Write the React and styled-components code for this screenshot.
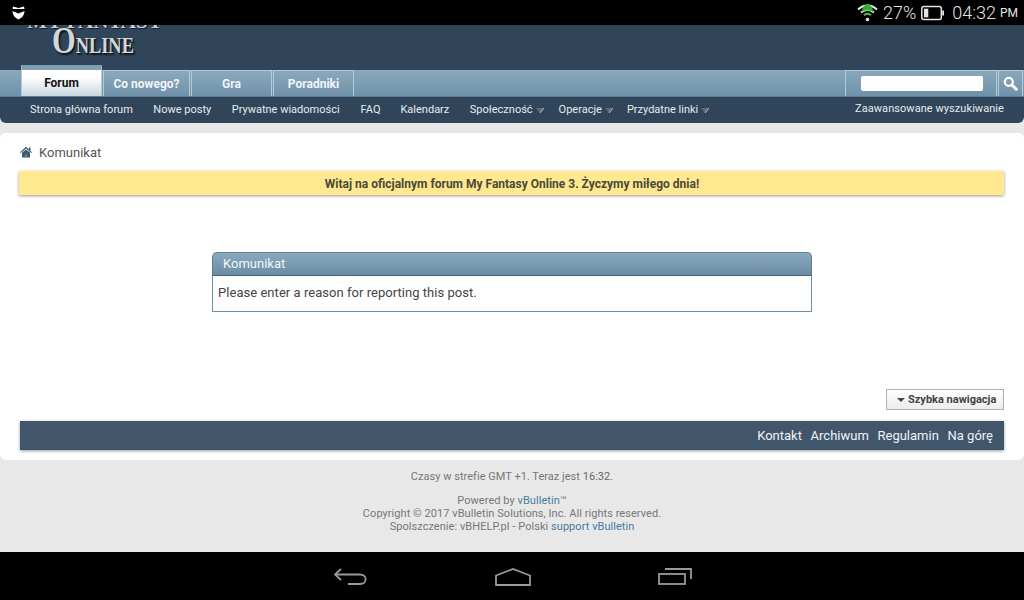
import React from "react";
import styled, { createGlobalStyle } from "styled-components";

const GlobalStyle = createGlobalStyle`
  html, body {
    margin: 0;
    padding: 0;
    background: #e8e8e8;
  }
  * {
    box-sizing: border-box;
  }
`;

const Page = styled.div`
  width: 1024px;
  height: 600px;
  display: flex;
  flex-direction: column;
  overflow: hidden;
  background: #e8e8e8;
  font-family: Roboto, "Liberation Sans", sans-serif;
`;

const StatusBar = styled.div`
  height: 25px;
  flex: none;
  background: #000;
  display: flex;
  align-items: center;
  padding: 0 6px 0 12px;
  color: #e4e4e4;
`;

const StatusRight = styled.div`
  margin-left: auto;
  display: flex;
  align-items: center;
`;

const Percent = styled.span`
  font-size: 18px;
  font-weight: 300;
  margin: 0 5px 0 5px;
`;

const Clock = styled.span`
  font-size: 18px;
  font-weight: 300;
  margin-left: 8px;
`;

const Meridiem = styled.span`
  font-size: 12px;
  margin-left: 4px;
`;

const Header = styled.div`
  height: 45px;
  flex: none;
  background: #304559;
  padding-left: 25px;
`;

const LogoTop = styled.div`
  width: 140px;
  height: 4px;
  overflow: hidden;
  display: flex;
  align-items: flex-end;
  justify-content: center;
  font-family: "Liberation Serif", serif;
  font-weight: bold;
  font-size: 21px;
  line-height: 0.7;
  white-space: nowrap;
  color: #c9ced2;
  text-shadow: 1px 1px 1px #10181f;
`;

const Logo = styled.div`
  width: fit-content;
  font-family: "Liberation Serif", serif;
  font-weight: bold;
  font-size: 23px;
  line-height: 30px;
  margin: -4px 0 0 27px;
  transform: scaleX(0.8);
  transform-origin: left center;
  color: #d3d7da;
  text-shadow: 1px 1px 1px #10181f, 2px 2px 2px #10181f;
`;

const LogoCap = styled.span`
  font-size: 38px;
`;

const TabBar = styled.div`
  height: 27px;
  flex: none;
  background: linear-gradient(#8ba9bd, #6f91a8);
  border-bottom: 1px solid #5d7f96;
  display: flex;
  align-items: flex-end;
  padding: 0 1px 0 21px;
`;

const Tab = styled.div`
  width: ${(p) => p.$width}px;
  height: ${(p) => (p.$active ? 31 : 26)}px;
  flex: none;
  margin-right: 1px;
  padding-top: ${(p) => (p.$active ? 0 : 1)}px;
  display: flex;
  align-items: center;
  justify-content: center;
  font-size: 12px;
  font-weight: 700;
  color: ${(p) => (p.$active ? "#111" : "#f2f5f7")};
  border: 1px solid #b4cad8;
  border-bottom: none;
  border-top: ${(p) => (p.$active ? "5px solid #7f9fb5" : "1px solid #b4cad8")};
  background: ${(p) =>
    p.$active ? "linear-gradient(#fff, #fff 30%, #c8d6e0)" : "linear-gradient(#8ba9bd, #6f91a8)"};
`;

const SearchBox = styled.div`
  margin-left: auto;
  width: 152px;
  height: 26px;
  border: 1px solid #b4cad8;
  border-bottom: none;
  display: flex;
  align-items: center;
  justify-content: center;
  padding-left: 1px;
`;

const SearchInput = styled.div`
  width: 122px;
  height: 15px;
  background: #fff;
  border-radius: 2px;
`;

const SearchButton = styled.div`
  width: 25px;
  height: 26px;
  margin-left: 1px;
  border: 1px solid #b4cad8;
  border-bottom: none;
  display: flex;
  align-items: center;
  justify-content: center;
`;

const SubNav = styled.div`
  height: 26px;
  flex: none;
  background: #304559;
  border-radius: 0 0 6px 6px;
  display: flex;
  align-items: center;
  padding: 0 20px 2px 30px;
  font-size: 11px;
  color: #e6ebef;
`;

const SubLink = styled.span`
  margin-right: ${(p) => p.$gap}px;
  display: flex;
  align-items: center;
  white-space: nowrap;
`;

const CaretIcon = styled.svg`
  flex: none;
  margin: 3px 0 0 3px;
`;

const AdvancedLink = styled.span`
  margin-left: auto;
  white-space: nowrap;
  letter-spacing: 0.06px;
  position: relative;
  top: -1px;
`;

const Content = styled.div`
  height: 327px;
  flex: none;
  margin-top: 10px;
  background: #fff;
  border-radius: 6px;
  padding: 0 20px 0 19px;
  display: flex;
  flex-direction: column;
`;

const Breadcrumb = styled.div`
  height: 38px;
  flex: none;
  display: flex;
  align-items: center;
  padding-left: 1px;
  gap: 7px;
  font-size: 13px;
  color: #555;
`;

const Notice = styled.div`
  height: 24px;
  flex: none;
  padding: 1px 0 0 1px;
  background: #ffe88f;
  box-shadow: 0 1px 3px #9a9a9a;
  display: flex;
  align-items: center;
  justify-content: center;
  font-size: 12px;
  font-weight: 700;
  color: #4a4a3a;
`;

const MessageBox = styled.div`
  width: 600px;
  flex: none;
  margin: 57px auto 0;
  position: relative;
  left: 0.5px;
`;

const MessageHead = styled.div`
  height: 24px;
  background: linear-gradient(#8ba9bd, #6a8ca4);
  border: 1px solid #5d7f96;
  border-bottom-color: #3f5f76;
  border-radius: 5px 5px 0 0;
  display: flex;
  align-items: center;
  padding: 0 0 2px 10px;
  font-size: 13px;
  color: #f4f6f8;
`;

const MessageBody = styled.div`
  height: 36px;
  background: #fff;
  border: 1px solid #6f91a8;
  border-top: none;
  display: flex;
  align-items: center;
  padding: 0 0 2px 5px;
  font-size: 13px;
  letter-spacing: 0.04px;
  color: #444;
`;

const QuickNavRow = styled.div`
  flex: none;
  display: flex;
  justify-content: flex-end;
  margin-top: 77px;
`;

const QuickNav = styled.div`
  width: 118px;
  height: 21px;
  padding-left: 10px;
  background: linear-gradient(#fff, #ececec);
  border: 1px solid #b0b0b0;
  display: flex;
  align-items: center;
  gap: 3px;
  font-size: 11px;
  font-weight: 700;
  white-space: nowrap;
  color: #444;
`;

const QuickCaret = styled.span`
  width: 0;
  height: 0;
  flex: none;
  margin-top: 1px;
  border-left: 4px solid transparent;
  border-right: 4px solid transparent;
  border-top: 4px solid #444;
`;

const BottomBar = styled.div`
  height: 29px;
  flex: none;
  margin: 11px 0 0 1px;
  background: #41566b;
  box-shadow: 0 1px 3px #999;
  display: flex;
  align-items: center;
  justify-content: flex-end;
  gap: 8.7px;
  padding-right: 11px;
  font-size: 13px;
  color: #f0f3f5;
`;

const Footer = styled.div`
  flex: 1;
  padding-top: 10px;
  text-align: center;
  font-size: 11px;
  line-height: 13px;
  letter-spacing: 0.05px;
  color: #777;
`;

const FooterTime = styled.div`
  margin-bottom: 11px;
  letter-spacing: 0.03px;
`;

const Strong = styled.span`
  color: #666;
`;

const FooterLink = styled.span`
  color: #4a7a9c;
`;

const NavBar = styled.div`
  height: 48px;
  flex: none;
  background: #000;
  display: flex;
  align-items: center;
  justify-content: center;
  gap: 127.5px;
  padding: 1px 0 0 2px;
`;

const WifiIcon = () => (
  <svg width="21" height="19" viewBox="0 0 21 19" fill="none">
    <path d="M1 6.5C6.5 1 14.5 1 20 6.5" stroke="#e8e8e8" strokeWidth="2" />
    <path d="M4 9.5C8 6 13 6 17 9.5" stroke="#e8e8e8" strokeWidth="2" />
    <path d="M6.5 3.5L10.5 0.5L14.5 3.5L17 9.5C13 6.5 8 6.5 4 9.5Z" fill="#2fae2f" />
    <path d="M7 12.2C9.2 10.4 11.8 10.4 14 12.2" stroke="#46c93a" strokeWidth="2" />
    <circle cx="10.5" cy="16.5" r="1.8" fill="#e8e8e8" />
  </svg>
);

const BatteryIcon = () => (
  <svg width="23" height="16" viewBox="0 0 23 16" fill="none">
    <rect x="0.8" y="1.5" width="19.5" height="13" rx="2" stroke="#e4e4e4" strokeWidth="1.5" />
    <rect x="3" y="3.7" width="4.3" height="8.6" fill="#e4e4e4" />
    <rect x="21.2" y="5.5" width="1.8" height="5" fill="#e4e4e4" />
  </svg>
);

const ShieldIcon = () => (
  <svg width="13" height="14" viewBox="0 0 13 14">
    <path d="M1 0.5L6.5 2L12 0.5L12.5 3L0.5 3Z" fill="#fff" />
    <path d="M0.5 5L6.5 7.5L12.5 5C12.5 9 10 12 6.5 13.5C3 12 0.5 9 0.5 5Z" fill="#fff" />
  </svg>
);

const SearchIcon = () => (
  <svg width="15" height="15" viewBox="0 0 15 15" fill="none">
    <circle cx="5.8" cy="5.8" r="4" stroke="#fff" strokeWidth="2.2" />
    <path d="M9 9L13.3 13.3" stroke="#fff" strokeWidth="3" strokeLinecap="round" />
  </svg>
);

const HomeIcon = () => (
  <svg width="12" height="12" viewBox="0 0 12 12">
    <path d="M6 0.8L12 6.2L11.2 7L6 2.6L0.8 7L0 6.2Z" fill="#3b5871" />
    <path d="M2 6.8L6 3.4L10 6.8V11.5H2Z" fill="#3b5871" />
    <rect x="5.2" y="8.5" width="1.6" height="3" fill="#7f93a5" />
    <rect x="9" y="1.5" width="1.5" height="3" fill="#3b5871" />
  </svg>
);

const MenuCaret = () => (
  <CaretIcon width="8" height="5" viewBox="0 0 8 5">
    <path d="M0 0H8L4 5Z" fill="#5f6c79" />
    <path d="M8 0L4 5" stroke="#b9c0c7" strokeWidth="1" />
  </CaretIcon>
);

const BackIcon = () => (
  <svg width="33" height="17" viewBox="0 0 33 17" fill="none" stroke="#9a9a9a" strokeWidth="1.8">
    <path d="M7 1L1 6.5L7 12" />
    <path d="M1 6.5H26C33.5 6.5 33.5 16 26 16H14" />
  </svg>
);

const HomeKeyIcon = () => (
  <svg width="36" height="18" viewBox="0 0 36 18" fill="none" stroke="#9a9a9a" strokeWidth="1.8">
    <path d="M1 17V7.5L18 1L35 7.5V17Z" />
  </svg>
);

const RecentIcon = () => (
  <svg width="34" height="17" viewBox="0 0 34 17" fill="none" stroke="#9a9a9a" strokeWidth="1.8">
    <rect x="1" y="6" width="26" height="10" />
    <path d="M7 1H33V11" />
  </svg>
);

const tabs = [
  { label: "Forum", width: 81, active: true },
  { label: "Co nowego?", width: 87 },
  { label: "Gra", width: 81 },
  { label: "Poradniki", width: 81 },
];

const subLinks = [
  { label: "Strona główna forum", gap: 20.5 },
  { label: "Nowe posty", gap: 20.5 },
  { label: "Prywatne wiadomości", gap: 21 },
  { label: "FAQ", gap: 20 },
  { label: "Kalendarz", gap: 20.5 },
  { label: "Społeczność", gap: 15, caret: true },
  { label: "Operacje", gap: 14, caret: true },
  { label: "Przydatne linki", caret: true },
];

const App = () => (
  <Page>
    <GlobalStyle />
    <StatusBar>
      <ShieldIcon />
      <StatusRight>
        <WifiIcon />
        <Percent>27%</Percent>
        <BatteryIcon />
        <Clock>04:32</Clock>
        <Meridiem>PM</Meridiem>
      </StatusRight>
    </StatusBar>
    <Header>
      <LogoTop>MY FANTASY</LogoTop>
      <Logo>
        <LogoCap>O</LogoCap>NLINE
      </Logo>
    </Header>
    <TabBar>
      {tabs.map((tab) => (
        <Tab key={tab.label} $width={tab.width} $active={tab.active}>
          {tab.label}
        </Tab>
      ))}
      <SearchBox>
        <SearchInput />
      </SearchBox>
      <SearchButton>
        <SearchIcon />
      </SearchButton>
    </TabBar>
    <SubNav>
      {subLinks.map((link) => (
        <SubLink key={link.label} $gap={link.gap}>
          {link.label}
          {link.caret && <MenuCaret />}
        </SubLink>
      ))}
      <AdvancedLink>Zaawansowane wyszukiwanie</AdvancedLink>
    </SubNav>
    <Content>
      <Breadcrumb>
        <HomeIcon />
        Komunikat
      </Breadcrumb>
      <Notice>Witaj na oficjalnym forum My Fantasy Online 3. Życzymy miłego dnia!</Notice>
      <MessageBox>
        <MessageHead>Komunikat</MessageHead>
        <MessageBody>Please enter a reason for reporting this post.</MessageBody>
      </MessageBox>
      <QuickNavRow>
        <QuickNav>
          <QuickCaret />
          Szybka nawigacja
        </QuickNav>
      </QuickNavRow>
      <BottomBar>
        <span>Kontakt</span>
        <span>Archiwum</span>
        <span>Regulamin</span>
        <span>Na górę</span>
      </BottomBar>
    </Content>
    <Footer>
      <FooterTime>
        Czasy w strefie GMT +1. Teraz jest <Strong>16:32</Strong>.
      </FooterTime>
      <div>
        Powered by <FooterLink>vBulletin</FooterLink>™
      </div>
      <div>Copyright © 2017 vBulletin Solutions, Inc. All rights reserved.</div>
      <div>
        Spolszczenie: vBHELP.pl - Polski <FooterLink>support vBulletin</FooterLink>
      </div>
    </Footer>
    <NavBar>
      <BackIcon />
      <HomeKeyIcon />
      <RecentIcon />
    </NavBar>
  </Page>
);

export default App;
